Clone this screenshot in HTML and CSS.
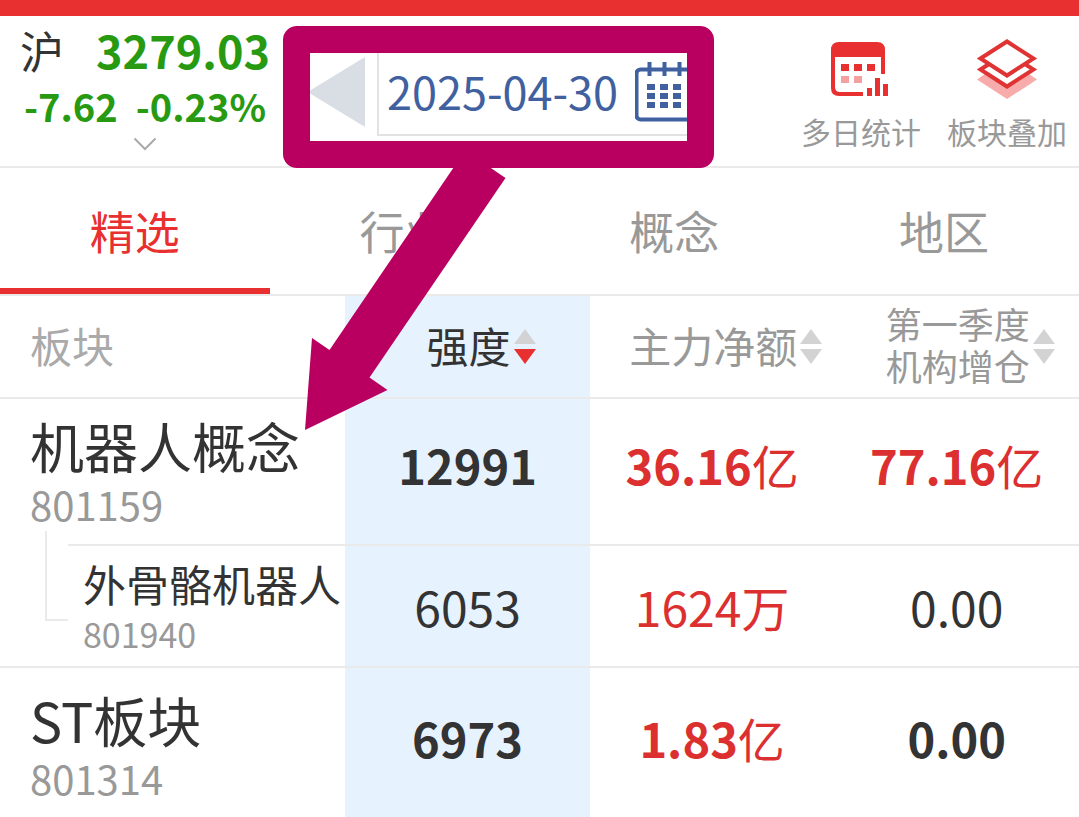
FILE: index.html
```html
<!DOCTYPE html>
<html lang="zh-CN">
<head>
<meta charset="utf-8">
<meta name="viewport" content="width=device-width, initial-scale=1">
<title>板块</title>
<link rel="stylesheet" href="styles.css">
</head>
<body>
<header class="topbar">
  <button class="index" type="button">
    <span class="index-row"><span class="market">沪</span><span class="points">3279.03</span></span>
    <span class="index-row change"><span>-7.62</span><span>-0.23%</span></span>
    <svg class="chevron" viewBox="0 0 24 14" aria-hidden="true"><path d="M1.500 1.500 12 12 22.500 1.500"/></svg>
  </button>
  <div class="datebox">
    <div class="dateview">
      <button class="prev" type="button" aria-label="前一天"><svg viewBox="0 0 56 70" aria-hidden="true"><path d="M55 0V70L0 36.500V33.500Z"/></svg></button>
      <button class="date" type="button">
        <span>2025-04-30</span>
        <svg class="cal" viewBox="0 0 60 60" aria-hidden="true">
          <rect class="cal-line" x="1.500" y="7.500" width="57" height="50" rx="4"/>
          <path class="cal-line" d="M14.500 0v14M29.500 0v14M44.500 0v14"/>
          <path class="cal-dots" d="M12 22h8v6h-8zM25 22h8v6h-8zM38 22h8v6h-8zM12 31h8v6h-8zM25 31h8v6h-8zM38 31h8v6h-8zM12 40h8v6h-8zM25 40h8v6h-8zM38 40h8v6h-8z"/>
        </svg>
      </button>
    </div>
    <svg class="arrow" viewBox="0 0 204 266" aria-hidden="true"><path d="M151 0 24.500 186 7 174 0 266 82.500 226 64.500 213.500 200.500 14 180 0Z"/></svg>
  </div>
  <nav class="tools">
    <button class="tool" type="button">
      <svg viewBox="0 0 60 60" aria-hidden="true">
        <path fill="#e83030" d="M8 0H46Q54 0 54 8V32H50V15H4V45Q4 50 9 50H32V54H8Q0 54 0 46V8Q0 0 8 0ZM10 22h8v7h-8zM23 22h8v7h-8zM36 22h8v7h-8zM36 46h5v8h-5zM44 36h5v18h-5zM52 42h5v12h-5z"/>
        <path fill="#f4a0a0" d="M10 34h8v7h-8zM23 34h8v7h-8z"/>
      </svg>
      <span>多日统计</span>
    </button>
    <button class="tool" type="button">
      <svg viewBox="0 0 60 60" aria-hidden="true">
        <path fill="#f7abab" d="M0 37.500 8 32 30 46 52 32 60 37.500 30 57Z"/>
        <path fill="#fff" stroke="#e03434" stroke-width="4" d="M3.500 27.500 30 10.500 56.500 27.500 30 44.500Z"/>
        <path fill="#fff" stroke="#e03434" stroke-width="4" d="M3.500 16.500 30 -.5 56.500 16.500 30 33.500Z"/>
      </svg>
      <span>板块叠加</span>
    </button>
  </nav>
</header>
<nav class="tabs">
  <button class="tab active" type="button">精选</button>
  <button class="tab" type="button">行业</button>
  <button class="tab" type="button">概念</button>
  <button class="tab" type="button">地区</button>
</nav>
<table class="board">
  <colgroup><col class="c-name"><col class="c-num"><col class="c-num"><col class="c-num"></colgroup>
  <thead>
    <tr>
      <th class="name" scope="col">板块</th>
      <th class="hot" scope="col"><button class="sort on" type="button">强度<svg viewBox="0 0 24 36" aria-hidden="true"><path d="M12 0 23 15H1Z"/><path class="down" d="M1 20H23L12 35Z"/></svg></button></th>
      <th scope="col"><button class="sort" type="button">主力净额<svg viewBox="0 0 24 36" aria-hidden="true"><path d="M12 0 23 15H1Z"/><path d="M1 20H23L12 35Z"/></svg></button></th>
      <th scope="col"><button class="sort small" type="button"><span>第一季度<br>机构增仓</span><svg viewBox="0 0 24 36" aria-hidden="true"><path d="M12 0 23 15H1Z"/><path d="M1 20H23L12 35Z"/></svg></button></th>
    </tr>
  </thead>
  <tbody>
    <tr class="main first">
      <th class="name" scope="row"><span class="title">机器人概念</span><span class="code">801159</span></th>
      <td class="hot">12991</td>
      <td class="up">36.16<span class="unit">亿</span></td>
      <td class="up">77.16<span class="unit">亿</span></td>
    </tr>
    <tr class="child">
      <th class="name" scope="row"><span class="branch"></span><span class="title">外骨骼机器人</span><span class="code">801940</span></th>
      <td class="hot">6053</td>
      <td class="up">1624<span class="unit">万</span></td>
      <td>0.00</td>
    </tr>
    <tr class="main">
      <th class="name" scope="row"><span class="title">ST板块</span><span class="code">801314</span></th>
      <td class="hot">6973</td>
      <td class="up">1.83<span class="unit">亿</span></td>
      <td>0.00</td>
    </tr>
  </tbody>
</table>
</body>
</html>
```
FILE: styles.css
```css
* { box-sizing: border-box; }
body {
  margin: 0;
  background: #fff;
  color: #333;
  font-family: "Noto Sans CJK SC", sans-serif;
  overflow: hidden;
}
button {
  margin: 0;
  padding: 0;
  border: 0;
  background: none;
  color: inherit;
  font: inherit;
}
svg { display: block; flex: none; }

.topbar {
  display: grid;
  grid-template-columns: 283px 431px 1fr;
  height: 168px;
  border-top: 16px solid #e83030;
  border-bottom: 2px solid #eaeaea;
}
.index {
  display: flex;
  flex-direction: column;
  align-items: center;
  padding: 6px 13px 0 20px;
  color: #279a12;
  font-weight: 700;
}
.index-row {
  display: flex;
  justify-content: space-between;
  width: 100%;
  height: 56px;
  font-size: 45px;
  line-height: 56px;
}
.market { color: #333; font-size: 44px; font-weight: 400; }
.change { padding: 0 4px; font-size: 38px; }
.chevron { width: 24px; height: 14px; margin-top: 3px; }
.chevron path { fill: none; stroke: #aaa; stroke-width: 2; }

.datebox { position: relative; height: 142px; margin-top: 10px; z-index: 2; }
.dateview {
  display: flex;
  height: 100%;
  overflow: hidden;
  border: 27px solid #b90060;
  border-radius: 14px;
  background: #fff;
}
.prev { flex: none; width: 67px; padding-top: 4px; }
.prev svg { width: 56px; height: 70px; margin-bottom: 14px; }
.prev path { fill: #d9dee5; }
.date {
  display: flex;
  flex: none;
  align-items: flex-start;
  gap: 17px;
  height: 83px;
  padding-left: 8px;
  border-left: 2px solid #e2e2e2;
  border-bottom: 2px solid #e2e2e2;
  color: #4060a0;
  font-size: 45px;
  line-height: 76px;
}
.cal { width: 60px; height: 60px; margin-top: 9px; }
.cal-line { fill: none; stroke: #4060a0; stroke-width: 4; }
.cal-dots { fill: #4060a0; }
.arrow { position: absolute; left: 22px; top: 138px; width: 204px; height: 266px; pointer-events: none; }
.arrow path { fill: #b90060; }

.tools { display: flex; justify-content: flex-end; gap: 26px; padding: 26px 12px 0 0; }
.tool {
  display: flex;
  flex-direction: column;
  align-items: center;
  gap: 9px;
  height: 110px;
  color: #999;
  font-size: 30px;
  line-height: 40px;
}
.tool svg { width: 60px; height: 60px; overflow: visible; }

.tabs { display: grid; grid-template-columns: repeat(4, 1fr); height: 128px; border-bottom: 2px solid #eaeaea; }
.tab { padding-top: 4px; border-bottom: 6px solid transparent; color: #999; font-size: 45px; }
.tab.active { border-color: #e83030; color: #e83030; }

.board { width: 100%; table-layout: fixed; border-collapse: separate; border-spacing: 0; }
.c-name { width: 32%; }
.board th, .board td { padding: 0; text-align: center; font-weight: 400; border-bottom: 2px solid #eaeaea; }
.board .name { padding-left: 30px; text-align: left; white-space: nowrap; }
.board .hot { background: #e6f2fe; }
.board thead th { height: 103px; padding-bottom: 5px; color: #aaa; font-size: 42px; }
.sort { display: flex; align-items: center; justify-content: center; gap: 2px; width: 100%; padding-left: 28px; color: #999; }
.sort.on { color: #333; }
.sort.small { font-size: 36px; line-height: 42px; }
.sort svg { width: 24px; height: 36px; margin-top: 5px; fill: #d3d3d3; }
.sort .down { fill: #e83030; }

.title, .code { display: block; }
.code { color: #999; }
.main .title { font-size: 54px; line-height: 64px; }
.main .code { font-size: 40px; line-height: 52px; }
.main .name, .main td { height: 155px; vertical-align: top; }
.main .name { padding-top: 20px; }
.main td { padding-top: 34px; font-size: 47px; line-height: 72px; font-weight: 700; }
.first .name, .first td { height: 147px; }
.board .first .name { padding-top: 15px; border-bottom: 0; }
.board .first td { padding-top: 30px; }
.unit { font-weight: 400; }

.child .name, .child td { height: 122px; }
.board .child .name { position: relative; padding-left: 83px; }
.child .title { font-size: 43px; line-height: 56px; }
.child .code { font-size: 34px; line-height: 46px; }
.child td { font-size: 48px; line-height: 72px; }
.child .name::before {
  content: "";
  position: absolute;
  left: 68px;
  right: 0;
  top: -2px;
  border-top: 2px solid #eaeaea;
}
.branch {
  position: absolute;
  left: 45px;
  top: -15px;
  width: 23px;
  height: 90px;
  border-left: 2px solid #eaeaea;
  border-bottom: 2px solid #eaeaea;
}
.up { color: #dc3030; }
```
